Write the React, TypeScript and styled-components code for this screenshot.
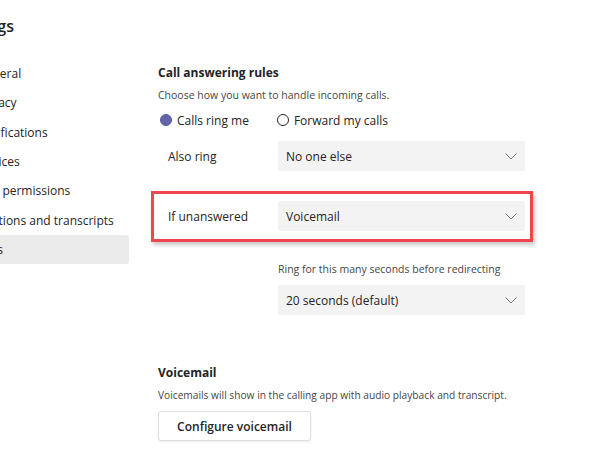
import React from "react";
import styled, { createGlobalStyle } from "styled-components";

const GlobalStyle = createGlobalStyle`
  html, body {
    margin: 0;
    padding: 0;
    background: #ffffff;
  }
  body {
    font-family: "Open Sans", "Noto Sans", "Liberation Sans", sans-serif;
    color: #252423;
    overflow: hidden;
  }
`;

const Page = styled.div`
  display: flex;
  width: 600px;
  height: 450px;
  overflow: hidden;
`;

const Sidebar = styled.nav`
  flex: 0 0 169px;
  margin-left: -40px;
  display: flex;
  flex-direction: column;
`;

const SidebarTitle = styled.h1`
  margin: 14px 0 0 -8px;
  height: 24px;
  font-size: 16px;
  font-weight: 600;
  line-height: 24px;
  color: #252423;
`;

const NavList = styled.ul`
  list-style: none;
  margin: 21px 0 0 0;
  padding: 0;
  display: flex;
  flex-direction: column;
`;

const NavItem = styled.li<{ $active?: boolean }>`
  height: 29.3px;
  display: flex;
  align-items: center;
  padding-left: 17px;
  font-size: 12px;
  color: #252423;
  border-radius: 0 3px 3px 0;
  background: ${(p) => (p.$active ? "#ebebeb" : "transparent")};
`;

const Main = styled.main`
  margin-left: 29px;
  width: 367px;
  display: flex;
  flex-direction: column;
  padding-top: 64px;
`;

const SectionTitle = styled.h2`
  margin: 0;
  font-size: 12px;
  font-weight: 700;
  line-height: 18px;
  color: #252423;
`;

const Description = styled.p`
  margin: 5px 0 0 0;
  font-size: 10.5px;
  line-height: 16px;
  color: #484644;
`;

const SmallDescription = styled(Description)`
  font-size: 10.2px;
`;

const RadioGroup = styled.div`
  display: flex;
  gap: 26px;
  margin-top: 8px;
  height: 18px;
  align-items: center;
`;

const RadioOption = styled.label`
  display: flex;
  align-items: center;
  gap: 5px;
  font-size: 12px;
  color: #252423;
`;

const RadioDot = styled.span<{ $checked?: boolean }>`
  width: 12px;
  height: 12px;
  box-sizing: border-box;
  border-radius: 50%;
  margin-left: 2px;
  border: 1px solid ${(p) => (p.$checked ? "#5b5fa6" : "#252423")};
  background: ${(p) => (p.$checked ? "#6264a7" : "#ffffff")};
`;

const FieldRow = styled.div<{ $gap?: number }>`
  display: grid;
  grid-template-columns: 120px 247px;
  align-items: center;
  margin-top: ${(p) => p.$gap ?? 0}px;
`;

const FieldLabel = styled.span`
  padding-left: 10px;
  font-size: 12px;
  color: #252423;
`;

const Select = styled.div`
  height: 30px;
  box-sizing: border-box;
  background: #f3f3f3;
  border-radius: 2px;
  display: flex;
  align-items: center;
  justify-content: space-between;
  padding: 0 8px 0 8px;
  font-size: 12px;
  color: #252423;
`;

const Highlight = styled.div`
  margin: 20px 0 0 -7px;
  width: 382px;
  box-sizing: border-box;
  border: 3px solid #f0464f;
  padding: 7px 11px 8px 4px;
  box-shadow: 2px 3px 4px rgba(0, 0, 0, 0.22);
`;

const Hint = styled.p`
  margin: 19px 0 0 120px;
  font-size: 10.5px;
  line-height: 16px;
  color: #484644;
`;

const VoicemailSection = styled.section`
  display: flex;
  flex-direction: column;
  margin-top: 49px;
`;

const Button = styled.button`
  align-self: flex-start;
  margin-top: 8px;
  height: 30px;
  width: 153px;
  font-family: inherit;
  font-size: 12px;
  font-weight: 600;
  color: #252423;
  background: #ffffff;
  border: 1px solid #e1dfdd;
  border-radius: 3px;
  box-shadow: 0 1px 2px rgba(0, 0, 0, 0.08);
`;

function Chevron() {
  return (
    <svg width="12" height="7" viewBox="0 0 12 7" fill="none">
      <path d="M0.5 0.5 L6 6 L11.5 0.5" stroke="#7a7876" strokeWidth="1" />
    </svg>
  );
}

function Dropdown({ value }: { value: string }) {
  return (
    <Select>
      <span>{value}</span>
      <Chevron />
    </Select>
  );
}

const navItems = [
  "General",
  "Privacy",
  "Notifications",
  "Devices",
  "App permissions",
  "Captions and transcripts",
  "Calls",
];

export default function App() {
  return (
    <>
      <GlobalStyle />
      <Page>
        <Sidebar>
          <SidebarTitle>Settings</SidebarTitle>
          <NavList>
            {navItems.map((item) => (
              <NavItem key={item} $active={item === "Calls"}>
                {item}
              </NavItem>
            ))}
          </NavList>
        </Sidebar>
        <Main>
          <SectionTitle>Call answering rules</SectionTitle>
          <Description>Choose how you want to handle incoming calls.</Description>
          <RadioGroup>
            <RadioOption>
              <RadioDot $checked />
              Calls ring me
            </RadioOption>
            <RadioOption>
              <RadioDot />
              Forward my calls
            </RadioOption>
          </RadioGroup>
          <FieldRow $gap={12}>
            <FieldLabel>Also ring</FieldLabel>
            <Dropdown value="No one else" />
          </FieldRow>
          <Highlight>
            <FieldRow>
              <FieldLabel>If unanswered</FieldLabel>
              <Dropdown value="Voicemail" />
            </FieldRow>
          </Highlight>
          <Hint>Ring for this many seconds before redirecting</Hint>
          <FieldRow $gap={8}>
            <span />
            <Dropdown value="20 seconds (default)" />
          </FieldRow>
          <VoicemailSection>
            <SectionTitle>Voicemail</SectionTitle>
            <SmallDescription>
              Voicemails will show in the calling app with audio playback and transcript.
            </SmallDescription>
            <Button>Configure voicemail</Button>
          </VoicemailSection>
        </Main>
      </Page>
    </>
  );
}
